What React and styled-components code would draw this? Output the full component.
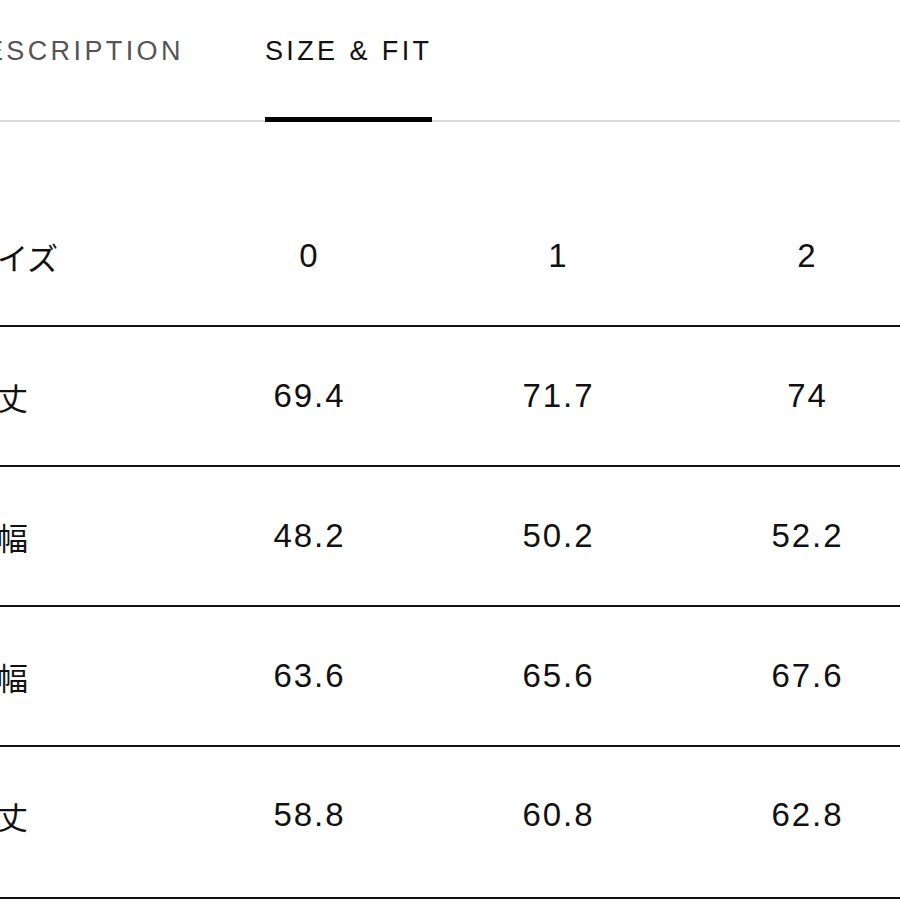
import React from 'react'
import styled, { createGlobalStyle } from 'styled-components'

const GlobalStyle = createGlobalStyle`
  html, body {
    margin: 0;
    padding: 0;
    background: #fff;
    overflow: hidden;
  }
`

const Page = styled.div`
  width: 900px;
  height: 900px;
  overflow: hidden;
  font-family: "Liberation Sans", "Noto Sans CJK JP", Arial, sans-serif;
  color: #111;
`

const Content = styled.div`
  width: 1000px;
  margin-left: -38px;
`

const TabBar = styled.div`
  display: flex;
  gap: 81px;
  border-bottom: 2px solid #dcdcdc;
`

const Tab = styled.div`
  font-size: 27px;
  line-height: 30px;
  letter-spacing: 3.4px;
  padding: 36px 0 51px;
  margin-bottom: -2px;
  color: ${p => (p.$active ? '#111' : '#555')};
  border-bottom: 5px solid ${p => (p.$active ? '#000' : 'transparent')};
  white-space: nowrap;
  cursor: pointer;
`

const Table = styled.div`
  margin-top: 65px;
`

const Row = styled.div`
  display: grid;
  grid-template-columns: 222px 249px 249px 249px;
  align-items: center;
  height: ${p => (p.$last ? '152px' : '140px')};
  padding-bottom: ${p => (p.$last ? '14px' : '0')};
  box-sizing: border-box;
  border-bottom: 2px solid #111;
`

const Label = styled.div`
  padding-left: 4px;
  font-size: 31px;
  font-family: "Noto Sans CJK JP", "Liberation Sans", sans-serif;
  white-space: nowrap;
`

const Cell = styled.div`
  text-align: center;
  font-size: 33px;
  letter-spacing: 2px;
  padding-left: 2px;
`

const rows = [
  ['サイズ', '0', '1', '2'],
  ['着丈', '69.4', '71.7', '74'],
  ['身幅', '48.2', '50.2', '52.2'],
  ['袖幅', '63.6', '65.6', '67.6'],
  ['袖丈', '58.8', '60.8', '62.8'],
]

const App = () => {
  const [tab, setTab] = React.useState('size')

  return (
    <Page>
      <GlobalStyle />
      <Content>
        <TabBar>
          <Tab $active={tab === 'desc'} onClick={() => setTab('desc')}>DESCRIPTION</Tab>
          <Tab $active={tab === 'size'} onClick={() => setTab('size')}>SIZE &amp; FIT</Tab>
        </TabBar>
        <Table>
          {rows.map((row, i) => (
            <Row key={i} $last={i === rows.length - 1}>
              <Label>{row[0]}</Label>
              {row.slice(1).map((v, j) => (
                <Cell key={j}>{v}</Cell>
              ))}
            </Row>
          ))}
        </Table>
      </Content>
    </Page>
  )
}

export default App
